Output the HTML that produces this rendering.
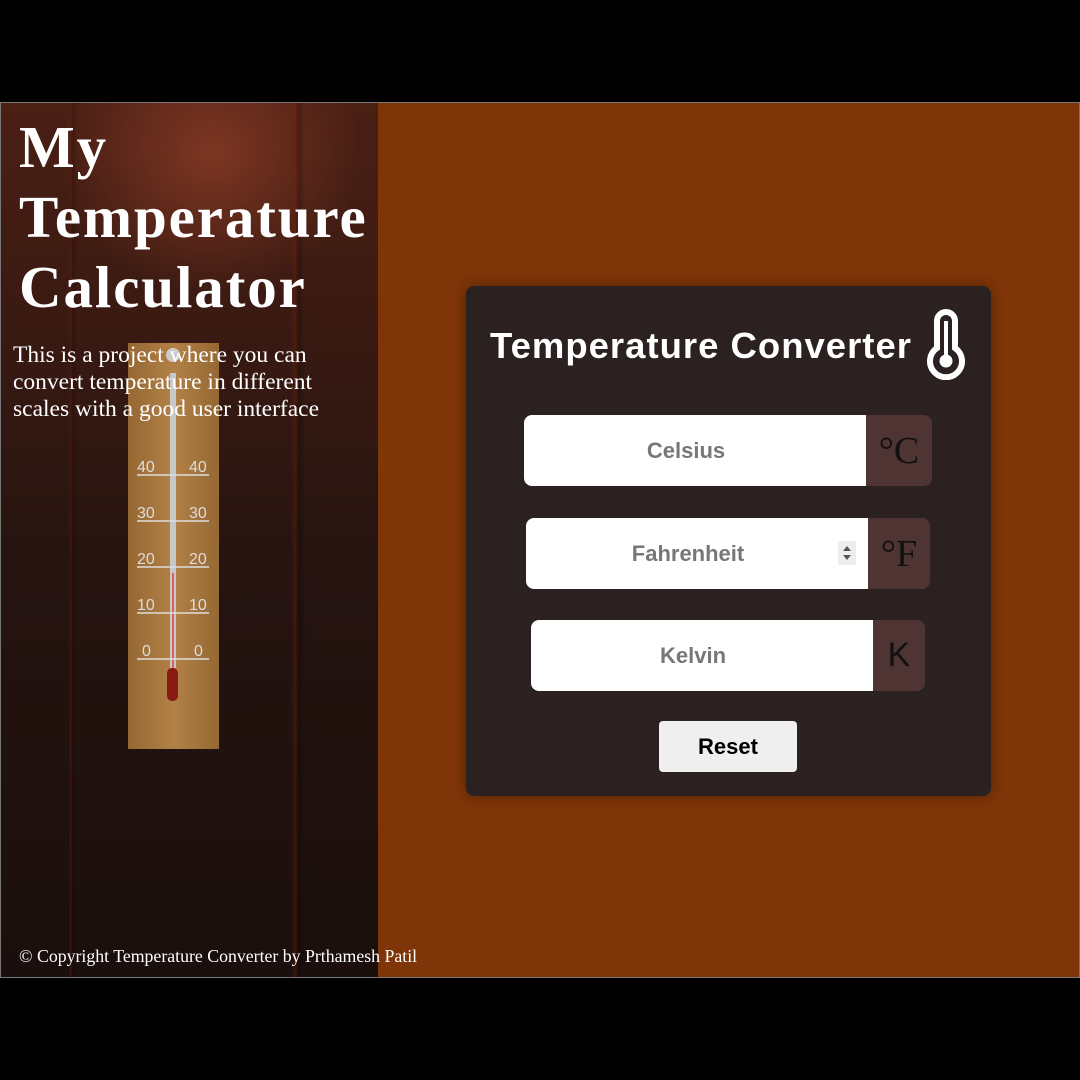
<!DOCTYPE html>
<html><head><meta charset="utf-8"><style>
*{margin:0;padding:0;box-sizing:border-box}
html,body{width:1080px;height:1080px;background:#000;overflow:hidden;position:relative}
#page{position:absolute;left:0;top:102px;width:1080px;height:876px;background:#7e3507;border:1px solid #777}
#left{position:absolute;left:1px;top:103px;width:377px;height:874px;overflow:hidden;
background:
linear-gradient(90deg,rgba(0,0,0,0) 0,rgba(0,0,0,0) 68px,rgba(120,30,10,.35) 69px,rgba(0,0,0,.2) 72px,rgba(0,0,0,0) 76px,rgba(0,0,0,0) 290px,rgba(120,30,10,.35) 294px,rgba(0,0,0,.25) 298px,rgba(0,0,0,0) 304px),
radial-gradient(ellipse 150px 140px at 210px 50px,rgba(140,60,38,.8),rgba(0,0,0,0)),
linear-gradient(180deg,#4a1f14 0,#3a1a12 220px,#261410 450px,#1a0f0c 874px);}
.serif{font-family:"Liberation Serif",serif;color:#fff}
#title{position:absolute;left:19px;top:112px;font-size:59px;font-weight:bold;line-height:70px;letter-spacing:1.9px}
#desc{position:absolute;left:13px;top:342px;font-size:23.5px;line-height:27px}
#copy{position:absolute;left:19px;top:946px;font-size:17.8px}
#card{position:absolute;left:466px;top:286px;width:525px;height:510px;background:#2c2121;border-radius:8px;box-shadow:0 0 12px rgba(0,0,0,.35)}
.sans{font-family:"Liberation Sans",sans-serif}
#ct{position:absolute;left:490px;top:325px;font-size:36.5px;font-weight:bold;color:#fff;letter-spacing:1px}
.inp{position:absolute;height:71px;background:#fff;border-radius:8px 0 0 8px;font:bold 22px "Liberation Sans",sans-serif;color:#777;display:flex;align-items:center;justify-content:center;padding-right:18px}
.unit{position:absolute;height:71px;background:#4e3433;border-radius:0 8px 8px 0;font-family:"Liberation Serif",serif;font-size:38px;color:#111;display:flex;align-items:center;justify-content:center}
#reset{position:absolute;left:659px;top:721px;width:138px;height:51px;background:#efefef;border-radius:4px;font:bold 22px "Liberation Sans",sans-serif;color:#000;display:flex;align-items:center;justify-content:center}
</style></head><body>
<div id="page"></div>
<div id="left">
<svg width="377" height="874" style="position:absolute;left:0;top:0">
<defs><linearGradient id="g" x1="0" x2="1"><stop offset="0" stop-color="#7a5020"/><stop offset=".5" stop-color="#c09050"/><stop offset="1" stop-color="#7a5020"/></linearGradient></defs>
<rect x="127" y="240" width="91" height="406" fill="#a8773f"/>
<rect x="127" y="240" width="91" height="406" fill="url(#g)" opacity=".4"/>
<circle cx="172" cy="252" r="7" fill="#ccc"/>
<rect x="169" y="270" width="6" height="295" fill="#c8c8c8"/>
<rect x="171" y="470" width="2" height="100" fill="#e06060"/>
<rect x="166" y="565" width="11" height="33" rx="5" fill="#8a1a14"/>
<g stroke="#ddd" stroke-width="1.5" fill="none">
<line x1="136" y1="372" x2="208" y2="372"/><line x1="136" y1="418" x2="208" y2="418"/>
<line x1="136" y1="464" x2="208" y2="464"/><line x1="136" y1="510" x2="208" y2="510"/>
<line x1="136" y1="556" x2="208" y2="556"/>
</g>
<g fill="#ddd" font-family="Liberation Sans,sans-serif" font-size="16">
<text x="136" y="369">40</text><text x="188" y="369">40</text>
<text x="136" y="415">30</text><text x="188" y="415">30</text>
<text x="136" y="461">20</text><text x="188" y="461">20</text>
<text x="136" y="507">10</text><text x="188" y="507">10</text>
<text x="141" y="553">0</text><text x="193" y="553">0</text>
</g>
</svg>
</div>
<div id="title" class="serif">My<br>Temperature<br>Calculator</div>
<div id="desc" class="serif">This is a project where you can<br>convert temperature in different<br>scales with a good user interface</div>
<div id="copy" class="serif">© Copyright Temperature Converter by Prthamesh Patil</div>
<div id="card"></div>
<div id="ct" class="sans">Temperature Converter</div>
<svg style="position:absolute;left:926px;top:308px" width="40" height="72" viewBox="0 0 40 72">
<path d="M11 40 V13 a9 9 0 0 1 18 0 V40 a16 16 0 1 1 -18 0 Z" fill="none" stroke="#fff" stroke-width="6"/>
<rect x="18" y="13" width="4" height="36" fill="#fff"/>
<circle cx="20" cy="53" r="6.5" fill="#fff"/>
</svg>
<div class="inp" style="left:524px;top:415px;width:342px">Celsius</div>
<div class="unit" style="left:866px;top:415px;width:66px">°C</div>
<div class="inp" style="left:526px;top:518px;width:342px">Fahrenheit
<div style="position:absolute;left:312px;top:23px;width:18px;height:24px;background:#eee">
<div style="position:absolute;left:5px;top:5px;border:4px solid transparent;border-bottom:5px solid #555;border-top:0"></div>
<div style="position:absolute;left:5px;top:14px;border:4px solid transparent;border-top:5px solid #555;border-bottom:0"></div></div></div>
<div class="unit" style="left:868px;top:518px;width:62px">°F</div>
<div class="inp" style="left:531px;top:620px;width:342px">Kelvin</div>
<div class="unit" style="left:873px;top:620px;width:52px;font-family:'Liberation Sans',sans-serif;font-size:34px">K</div>
<div id="reset">Reset</div>
</body></html>
